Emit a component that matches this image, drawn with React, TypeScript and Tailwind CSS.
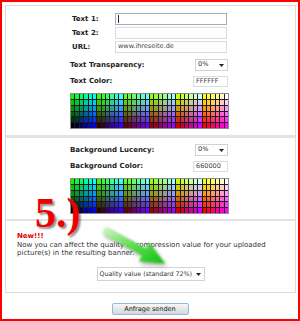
const LEVELS = [0, 51, 102, 153, 204, 255];

// web-safe palette: 6 blocks (red), 6 cols each (blue), 6 rows (green, top = bright)
const palette: string[] = [];
for (let row = 0; row < 6; row++) {
  const g = LEVELS[5 - row];
  for (let r = 0; r < 6; r++) {
    for (let b = 0; b < 6; b++) {
      palette.push(`rgb(${LEVELS[r]},${g},${LEVELS[b]})`);
    }
  }
}

function ColorGrid() {
  return (
    <div className="grid w-[159px] h-[36px] grid-cols-[repeat(36,1fr)] grid-rows-[repeat(6,1fr)] gap-px border border-[#8c8c8c] bg-[#1c1c1c]">
      {palette.map((c, i) => (
        <div key={i} style={{ backgroundColor: c }} />
      ))}
    </div>
  );
}

function Caret() {
  return (
    <svg width="5" height="3" viewBox="0 0 5 3" className="shrink-0">
      <path d="M0 0H5L2.5 3Z" fill="#222" />
    </svg>
  );
}

function Select({ value, className }: { value: string; className: string }) {
  return (
    <div
      className={`flex items-center justify-between border border-[#cfd3d6] bg-white pl-[2px] pr-[3px] text-[#333] ${className}`}
    >
      <span>{value}</span>
      <Caret />
    </div>
  );
}

function Field({ value, focused }: { value?: string; focused?: boolean }) {
  return (
    <div
      className={`relative flex h-[12px] w-[112px] items-center border bg-white pl-[2px] text-[6.5px] text-[#444] ${
        focused ? "border-[#a3aebb]" : "border-[#d8dde2]"
      }`}
    >
      {focused && <div className="h-[8px] w-px bg-[#333]" />}
      {value}
    </div>
  );
}

function Label({ children, className = "" }: { children: React.ReactNode; className?: string }) {
  return <span className={`font-bold text-[7px] text-[#222] ${className}`}>{children}</span>;
}

export default function App() {
  return (
    <div className="relative h-[321px] w-[300px] overflow-hidden border-2 border-[#ff0000] bg-white font-['DejaVu_Sans',Verdana,sans-serif]">
      <div className="ml-[3px] mt-[3px] w-[291px] border border-[#dcdcdc]">
        {/* text section */}
        <div className="pl-[64px] pt-[7px] pb-[6px]">
          <div className="flex flex-col gap-[2px]">
            <div className="flex h-[12px] items-center">
              <Label className="w-[45px] pl-[2px]">Text 1:</Label>
              <Field focused />
            </div>
            <div className="flex h-[12px] items-center">
              <Label className="w-[45px] pl-[2px]">Text 2:</Label>
              <Field />
            </div>
            <div className="flex h-[12px] items-center">
              <Label className="w-[45px] pl-[2px]">URL:</Label>
              <Field value="www.ihreseite.de" />
            </div>
          </div>
          <div className="mt-[6px] flex h-[12px] w-[158px] items-center justify-between">
            <Label>Text Transparency:</Label>
            <Select value="0%" className="h-[12px] w-[33px] text-[6.5px]" />
          </div>
          <div className="mt-[5px] flex h-[11px] w-[158px] items-center justify-between">
            <Label>Text Color:</Label>
            <div className="flex h-[11px] w-[35px] items-center border border-[#d8dde2] pl-[2px] text-[6.5px] text-[#444]">
              FFFFFF
            </div>
          </div>
          <div className="mt-[6px]">
            <ColorGrid />
          </div>
        </div>

        <div className="h-[3px] bg-[#e2e2e2]" />

        {/* background section */}
        <div className="pl-[64px] pt-[6px] pb-[5px]">
          <div className="flex h-[12px] w-[158px] items-center justify-between">
            <Label>Background Lucency:</Label>
            <Select value="0%" className="h-[12px] w-[33px] text-[6.5px]" />
          </div>
          <div className="mt-[5px] flex h-[11px] w-[158px] items-center justify-between">
            <Label>Background Color:</Label>
            <div className="flex h-[11px] w-[35px] items-center border border-[#d8dde2] pl-[2px] text-[6.5px] text-[#444]">
              660000
            </div>
          </div>
          <div className="mt-[6px]">
            <ColorGrid />
          </div>
        </div>

        <div className="h-[2px] bg-[#e2e2e2]" />

        {/* quality section */}
        <div className="h-[71px] pl-[11px] pt-[11px]">
          <div className="text-[7px] font-bold leading-[9px] text-[#e00000]">New!!!</div>
          <div className="text-[7px] leading-[8px] text-[#333]">
            Now you can affect the quality of compression value for your uploaded
            <br />
            picture(s) in the resulting banner.
          </div>
          <div className="mt-[10px] flex justify-center pr-[11px]">
            <Select value="Quality value (standard 72%)" className="h-[14px] w-[108px] text-[6.3px]" />
          </div>
        </div>
      </div>

      <div className="mt-[10px] flex justify-center">
        <button className="h-[12px] w-[77px] rounded-[2px] border border-[#8ebcdc] bg-gradient-to-b from-[#f7f7f7] to-[#d6d6d6] text-[6.5px] leading-none text-[#111]">
          Anfrage senden
        </button>
      </div>

      {/* step marker */}
      <div className="absolute left-[33px] top-[197px] font-['Liberation_Serif',serif] text-[42px] font-bold leading-[28px] text-[#ee0000] [text-shadow:2px_2px_2px_rgba(0,0,0,0.45)]">
        5.)
      </div>

      {/* green arrow */}
      <svg className="absolute left-[88px] top-[216px]" width="92" height="58" viewBox="0 0 92 58">
        <defs>
          <linearGradient id="ag" x1="0" y1="0" x2="1" y2="1">
            <stop offset="0" stopColor="#d6f7cf" />
            <stop offset="0.45" stopColor="#66e055" />
            <stop offset="1" stopColor="#0fc20f" />
          </linearGradient>
          <filter id="blur" x="-20%" y="-20%" width="140%" height="140%">
            <feGaussianBlur stdDeviation="1.2" />
          </filter>
          <filter id="sh" x="-20%" y="-20%" width="140%" height="140%">
            <feGaussianBlur stdDeviation="2.2" />
          </filter>
        </defs>
        <g filter="url(#sh)" opacity="0.35" transform="translate(2 3)">
          <path d="M15.9 8.5 L55.9 30.5 L59.3 24.4 L75 45.6 L48.7 43.6 L52.1 37.5 L12.1 15.5 Z" fill="#333" />
        </g>
        <g filter="url(#blur)">
          <path d="M15.9 8.5 L55.9 30.5 L59.3 24.4 L75 45.6 L48.7 43.6 L52.1 37.5 L12.1 15.5 Z" fill="url(#ag)" />
        </g>
      </svg>
    </div>
  );
}
